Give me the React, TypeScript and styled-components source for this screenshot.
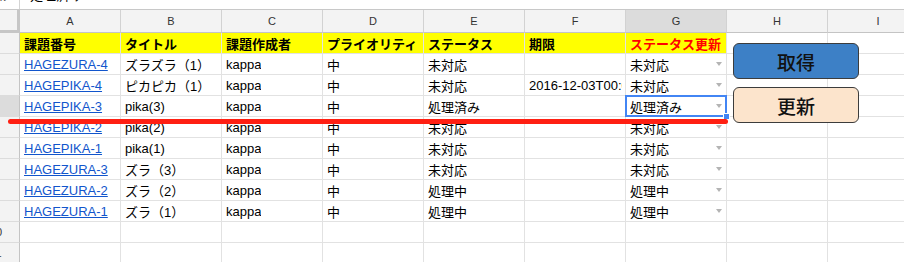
import React from 'react';
import styled, { createGlobalStyle, css } from 'styled-components';

const GlobalStyle = createGlobalStyle`
  html, body { margin: 0; padding: 0; background: #fff; overflow: hidden; }
  body { font-family: "Liberation Sans", Arial, "Noto Sans CJK JP", sans-serif; }
  * { box-sizing: border-box; }
`;

const Page = styled.div`
  position: relative;
  width: 904px;
  height: 262px;
  overflow: hidden;
  background: #fff;
`;

const FormulaBar = styled.div`
  display: grid;
  grid-template-columns: 20px 1fr;
  height: 10px;
  border-bottom: 1px solid #c8c8c8;
  overflow: hidden;
`;

const FxBox = styled.div`
  border-right: 1px solid #d4d4d4;
  overflow: hidden;
  font-family: "Liberation Serif", serif;
  font-style: italic;
  font-size: 13px;
  line-height: 16px;
  margin-top: -11px;
  color: #555;
  text-indent: -3px;
`;

const FormulaText = styled.div`
  padding-left: 10px;
  font-size: 13px;
  line-height: 16px;
  margin-top: -12px;
  color: #000;
  font-family: "Liberation Sans", "Noto Sans CJK JP", sans-serif;
`;

const Sheet = styled.div`
  display: grid;
  grid-template-columns: 20px repeat(9, 101px);
  grid-template-rows: 23px repeat(11, 21px);
`;

const Corner = styled.div`
  background: #f3f3f3;
  border-right: 3px solid #c6c6c6;
  border-bottom: 3px solid #c6c6c6;
`;

const ColHead = styled.div<{ $active?: boolean }>`
  background: ${(p) => (p.$active ? '#dcdcdc' : '#f3f3f3')};
  border-right: 1px solid #d2d2d2;
  border-bottom: 1px solid #c4c4c4;
  display: flex;
  align-items: center;
  justify-content: center;
  font-size: 11px;
  color: #333;
`;

const RowHead = styled.div<{ $active?: boolean }>`
  background: ${(p) => (p.$active ? '#dcdcdc' : '#f3f3f3')};
  border-right: 1px solid #c4c4c4;
  border-bottom: 1px solid #dcdcdc;
  display: flex;
  align-items: center;
  overflow: hidden;
  font-size: 11px;
  color: #333;
`;

const RowNum = styled.span`
  flex-shrink: 0;
  width: 46px;
  margin-left: -27px;
  text-align: center;
`;

const Cell = styled.div<{ $header?: boolean; $red?: boolean; $selected?: boolean }>`
  position: relative;
  border-right: 1px solid #e2e2e2;
  border-bottom: 1px solid #e2e2e2;
  padding: 0 3px 0 4px;
  display: flex;
  align-items: center;
  justify-content: space-between;
  overflow: hidden;
  white-space: nowrap;
  font-size: 13px;
  color: #000;
  font-family: "Liberation Sans", Arial, "Noto Sans CJK JP", sans-serif;
  ${(p) =>
    p.$header &&
    css`
      background: #ffff00;
      font-weight: bold;
      color: ${p.$red ? '#ff0000' : '#000'};
    `}
  ${(p) =>
    p.$selected &&
    css`
      overflow: visible;
      &::after {
        content: '';
        position: absolute;
        left: -1px;
        top: -1px;
        right: -1px;
        bottom: -1px;
        border: 2px solid #4285f4;
        pointer-events: none;
      }
    `}
`;

const CellText = styled.span`
  min-width: 0;
  overflow: hidden;
  white-space: nowrap;
`;

const Link = styled.a`
  color: #1155cc;
  text-decoration: underline;
`;

const Arrow = styled.span`
  flex-shrink: 0;
  width: 0;
  height: 0;
  border-left: 3.5px solid transparent;
  border-right: 3.5px solid transparent;
  border-top: 4px solid #b4b4b4;
  margin-right: 1px;
`;

const Handle = styled.span`
  position: absolute;
  right: -4px;
  bottom: -4px;
  width: 7px;
  height: 7px;
  background: #4285f4;
  border: 1px solid #fff;
  z-index: 2;
`;

const ActionButton = styled.div<{ $top: number; $bg: string }>`
  position: absolute;
  left: 733px;
  top: ${(p) => p.$top}px;
  width: 126px;
  height: 36px;
  background: ${(p) => p.$bg};
  border: 1px solid #3c3c3c;
  border-radius: 6px;
  display: flex;
  align-items: center;
  justify-content: center;
  font-size: 19px;
  font-weight: 500;
  color: #111;
  font-family: "Noto Sans CJK JP", sans-serif;
  z-index: 3;
`;

const RedLine = styled.div`
  position: absolute;
  left: 8px;
  top: 119px;
  width: 720px;
  height: 5px;
  border-radius: 3px;
  background: #ff1f12;
  z-index: 4;
`;

const cols = ['A', 'B', 'C', 'D', 'E', 'F', 'G', 'H', 'I'];
const headers = ['課題番号', 'タイトル', '課題作成者', 'プライオリティ', 'ステータス', '期限', 'ステータス更新'];

const rows: string[][] = [
  ['HAGEZURA-4', 'ズラズラ（1）', 'kappa', '中', '未対応', '', '未対応'],
  ['HAGEPIKA-4', 'ピカピカ（1）', 'kappa', '中', '未対応', '2016-12-03T00:00:00', '未対応'],
  ['HAGEPIKA-3', 'pika(3)', 'kappa', '中', '処理済み', '', '処理済み'],
  ['HAGEPIKA-2', 'pika(2)', 'kappa', '中', '未対応', '', '未対応'],
  ['HAGEPIKA-1', 'pika(1)', 'kappa', '中', '未対応', '', '未対応'],
  ['HAGEZURA-3', 'ズラ（3）', 'kappa', '中', '未対応', '', '未対応'],
  ['HAGEZURA-2', 'ズラ（2）', 'kappa', '中', '処理中', '', '処理中'],
  ['HAGEZURA-1', 'ズラ（1）', 'kappa', '中', '処理中', '', '処理中'],
];

export default function App() {
  return (
    <Page>
      <GlobalStyle />
      <FormulaBar>
        <FxBox>fx</FxBox>
        <FormulaText>処理済み</FormulaText>
      </FormulaBar>
      <Sheet>
        <Corner />
        {cols.map((c) => (
          <ColHead key={c} $active={c === 'G'}>
            {c}
          </ColHead>
        ))}
        <RowHead>
          <RowNum>1</RowNum>
        </RowHead>
        {headers.map((h, i) => (
          <Cell key={h} $header $red={i === 6}>
            <CellText>{h}</CellText>
          </Cell>
        ))}
        <Cell />
        <Cell />
        {rows.map((r, ri) => (
          <React.Fragment key={r[0]}>
            <RowHead $active={ri === 2}>
              <RowNum>{ri + 2}</RowNum>
            </RowHead>
            {r.map((v, ci) => (
              <Cell key={ci} $selected={ri === 2 && ci === 6}>
                {ci === 0 ? (
                  <Link>{v}</Link>
                ) : (
                  <CellText>{v}</CellText>
                )}
                {ci === 6 && <Arrow />}
                {ri === 2 && ci === 6 && <Handle />}
              </Cell>
            ))}
            <Cell />
            <Cell />
          </React.Fragment>
        ))}
        {[10, 11].map((n) => (
          <React.Fragment key={n}>
            <RowHead>
              <RowNum>{n}</RowNum>
            </RowHead>
            {cols.map((c) => (
              <Cell key={c} />
            ))}
          </React.Fragment>
        ))}
      </Sheet>
      <ActionButton $top={43} $bg="#3d80c6">取得</ActionButton>
      <ActionButton $top={87} $bg="#fce4cc">更新</ActionButton>
      <RedLine />
    </Page>
  );
}
